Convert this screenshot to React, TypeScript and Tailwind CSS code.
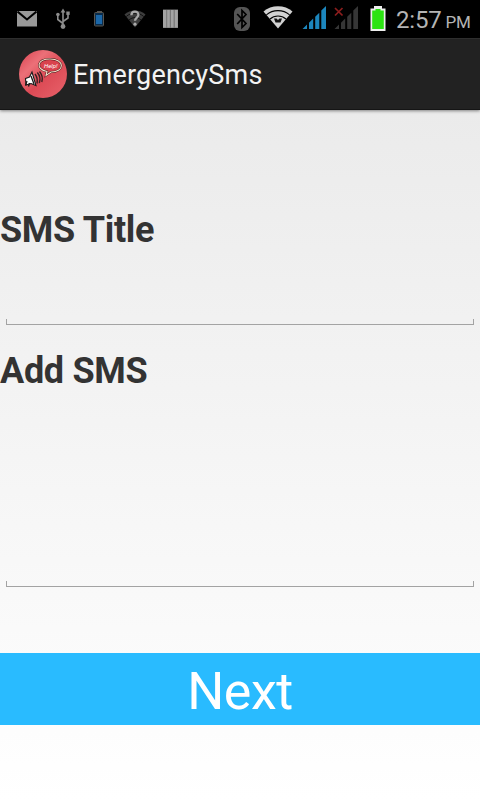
import { useState } from 'react';
import type { ReactNode } from 'react';

interface IconProps {
  width: number;
  className?: string;
  children: ReactNode;
}

function StatusIcon({ width, className, children }: IconProps) {
  return (
    <svg width={width} height={38} viewBox={`0 0 ${width} 38`} className={className}>
      {children}
    </svg>
  );
}

function StatusBar() {
  return (
    <div className="flex h-[38px] shrink-0 items-center bg-black pl-[17px]">
      {/* notifications */}
      <StatusIcon width={20} className="shrink-0">
        <path d="M0 11h20v15.5H0z" fill="#999" />
        <path d="M0.5 11.5L10 19.5L19.5 11.5" fill="none" stroke="#000" strokeWidth="2" />
      </StatusIcon>
      <StatusIcon width={14} className="ml-[19px] shrink-0">
        <path d="M7 11v15M7 23.5L1.8 19.5V15M7 21.5L12 18V13.5" fill="none" stroke="#8c8c8c" strokeWidth="1.6" />
        <path d="M7 8.5l2.4 4H4.6z" fill="#8c8c8c" />
        <circle cx="7" cy="26.5" r="2.4" fill="#8c8c8c" />
        <circle cx="1.9" cy="14.5" r="1.8" fill="#8c8c8c" />
        <path d="M10.3 11.5h3.4v3.4h-3.4z" fill="#8c8c8c" />
      </StatusIcon>
      <StatusIcon width={11} className="ml-[24px] shrink-0">
        <path d="M3 11h5v1.5H3z" fill="#555" />
        <rect x="0.5" y="12.5" width="9" height="13.5" rx="1" fill="#0b2c4a" stroke="#5a564f" />
        <rect x="2" y="15" width="6" height="9" fill="#1b67a8" />
      </StatusIcon>
      <StatusIcon width={22} className="ml-[19px] shrink-0">
        <path d="M11 27.5L0.5 14.5C6 9 16 9 21.5 14.5z" fill="#3d3d3d" />
        <path d="M2.2 16.6C7 12 15 12 19.8 16.6M5 20C8.6 16.8 13.4 16.8 17 20" fill="none" stroke="#111" strokeWidth="1" />
        <path d="M7.4 15.2C7.4 10.6 14.4 10.6 14.4 14.8C14.4 17.6 11 17.6 11 20.8" fill="none" stroke="#aaa" strokeWidth="2.3" />
        <circle cx="11" cy="24.2" r="1.6" fill="#aaa" />
      </StatusIcon>
      <StatusIcon width={15} className="ml-[17px] shrink-0">
        <path d="M0 9.5h15V28H0z" fill="#777" />
        <path d="M0 10h3.2v17.5H0zM4.2 10h2.6v17.5H4.2zM8 10h2.6v17.5H8zM11.8 10h3v17.5h-3z" fill="#a3a3a3" />
      </StatusIcon>

      {/* system */}
      <StatusIcon width={16} className="ml-[56px] shrink-0">
        <rect x="0" y="7" width="16" height="24" rx="6" fill="#555" />
        <path d="M3.2 14L12 23.5L8 27.5V10.5L12 14.5L3.2 24" fill="none" stroke="#000" strokeWidth="1.7" />
      </StatusIcon>
      <StatusIcon width={30} className="ml-[13px] shrink-0">
        <path d="M15 28.5L0.5 11.5C8 4.5 22 4.5 29.5 11.5z" fill="#d2d2d2" />
        <path d="M3.4 14.8C10 9.2 20 9.2 26.6 14.8M7 19C11.5 15 18.5 15 23 19" fill="none" stroke="#000" strokeWidth="1.1" />
        <path d="M11 18.5h2.5l1.5 1.5l1.5-1.5h2.5l-1.5 4h-5z" fill="#111" />
      </StatusIcon>
      <StatusIcon width={25} className="ml-[9px] shrink-0">
        <path d="M0.5 29L5 24.5V29zM7 22.8L11.2 18.6V29H7zM13.2 16.8L17.3 12.7V29h-4.1zM19.3 10.6L24 6V29h-4.7z" fill="#1c86bd" />
      </StatusIcon>
      <StatusIcon width={25} className="ml-[7px] shrink-0">
        <path d="M0.5 29L5 24.5V29zM7 22.8L11.2 18.6V29H7zM13.2 16.8L17.3 12.7V29h-4.1zM19.3 10.6L24 6V29h-4.7z" fill="#363636" />
        <path d="M1 8l7.5 7.5M8.5 8L1 15.5" stroke="#8c1d1d" strokeWidth="1.7" />
      </StatusIcon>
      <StatusIcon width={16} className="ml-[11px] shrink-0">
        <path d="M4 6h8v2.5h3.5V31H0.5V8.5H4z" fill="#eee" />
        <path d="M2.2 10.5H5.5V9h5v1.5h3.3V29H2.2z" fill="#2be312" />
      </StatusIcon>
      <div className="ml-[10px] flex items-baseline pt-[2px] whitespace-nowrap text-[#b4b4b4]">
        <span className="text-[24px] leading-[38px] tracking-[-0.2px]">2:57</span>
        <span className="ml-[4px] text-[17px] tracking-[-0.3px]">PM</span>
      </div>
    </div>
  );
}

function AppIcon() {
  return (
    <svg width="48" height="48" viewBox="0 0 48 48">
      <defs>
        <linearGradient id="ball" x1="0" y1="0" x2="1" y2="1">
          <stop offset="0" stopColor="#d8404e" />
          <stop offset="0.3" stopColor="#ec7078" />
          <stop offset="0.55" stopColor="#dc4a55" />
          <stop offset="1" stopColor="#e8636b" />
        </linearGradient>
      </defs>
      <circle cx="24" cy="24" r="24" fill="url(#ball)" />
      <path d="M28 21.5C16 19 18 9 31 9C46 9 46 22 32 22L27 25.5z" fill="#d9434d" stroke="#3d1215" strokeWidth="2" />
      <path d="M28 21.5C16 19 18 9 31 9C46 9 46 22 32 22L27 25.5z" fill="none" stroke="#f4dfc8" strokeWidth="1.1" />
      <text x="25" y="18" className="text-[6px] italic" fill="#fff">Help!</text>
      <path d="M6.5 28.5l4-1.5L13 22l4 13.500l-5-2l-5 1.500z" fill="#fff" stroke="#181818" strokeWidth="1.100" />
      <path d="M8 31l-1.500 4.500M10.500 33l-1 3.500M12 26l3 8" stroke="#181818" strokeWidth="1.300" />
      <path d="M16 24q3 4 2 9.500M18.300 22.500q4 4.500 2 10.500M20.500 21.500q4 4.500 2.300 10.500" fill="none" stroke="#3a2022" strokeWidth="1.400" />
    </svg>
  );
}

// Holo style field: thin underline with a short tick at both ends
function HoloField({ children }: { children: ReactNode }) {
  return (
    <div className="mx-[6px]">
      {children}
      <div className="h-[6px] border-x border-b border-[#a3a3a3]" />
    </div>
  );
}

export default function App() {
  const [title, setTitle] = useState('');
  const [message, setMessage] = useState('');

  return (
    <div className="flex h-[800px] w-[480px] flex-col overflow-hidden bg-[#f3f3f3] font-['Roboto',sans-serif]">
      <StatusBar />
      <header className="z-10 flex h-[72px] shrink-0 items-center border-t border-b border-t-[#2e2e2e] border-b-[#151515] bg-[#222] pl-[19px] shadow-[0_1px_3px_rgba(0,0,0,0.45)]">
        <AppIcon />
        <h1 className="ml-[6px] pt-[2px] text-[27px] leading-none tracking-[0.2px] text-[#f3f3f3]">EmergencySms</h1>
      </header>

      <main className="flex grow flex-col bg-linear-to-b from-[#ebebeb] to-white pt-[99px]">
        <label htmlFor="title" className="text-[36px] leading-[42px] font-bold tracking-[-0.3px] text-[#333]">SMS Title</label>
        <HoloField>
          <input
            id="title"
            className="block h-[68px] w-full bg-transparent px-2 text-[27px] text-[#222] outline-none"
            value={title}
            onChange={(e) => setTitle(e.target.value)}
          />
        </HoloField>
        <label htmlFor="message" className="mt-[25px] text-[36px] leading-[42px] font-bold tracking-[-0.3px] text-[#333]">Add SMS</label>
        <HoloField>
          <textarea
            id="message"
            className="block h-[189px] w-full resize-none bg-transparent px-2 text-[27px] text-[#222] outline-none"
            value={message}
            onChange={(e) => setMessage(e.target.value)}
          />
        </HoloField>
        <button className="mt-[66px] h-[72px] w-full bg-[#29bbff] pt-[5px] text-[52px] leading-[67px] tracking-[-0.5px] text-white">
          Next
        </button>
      </main>
    </div>
  );
}
